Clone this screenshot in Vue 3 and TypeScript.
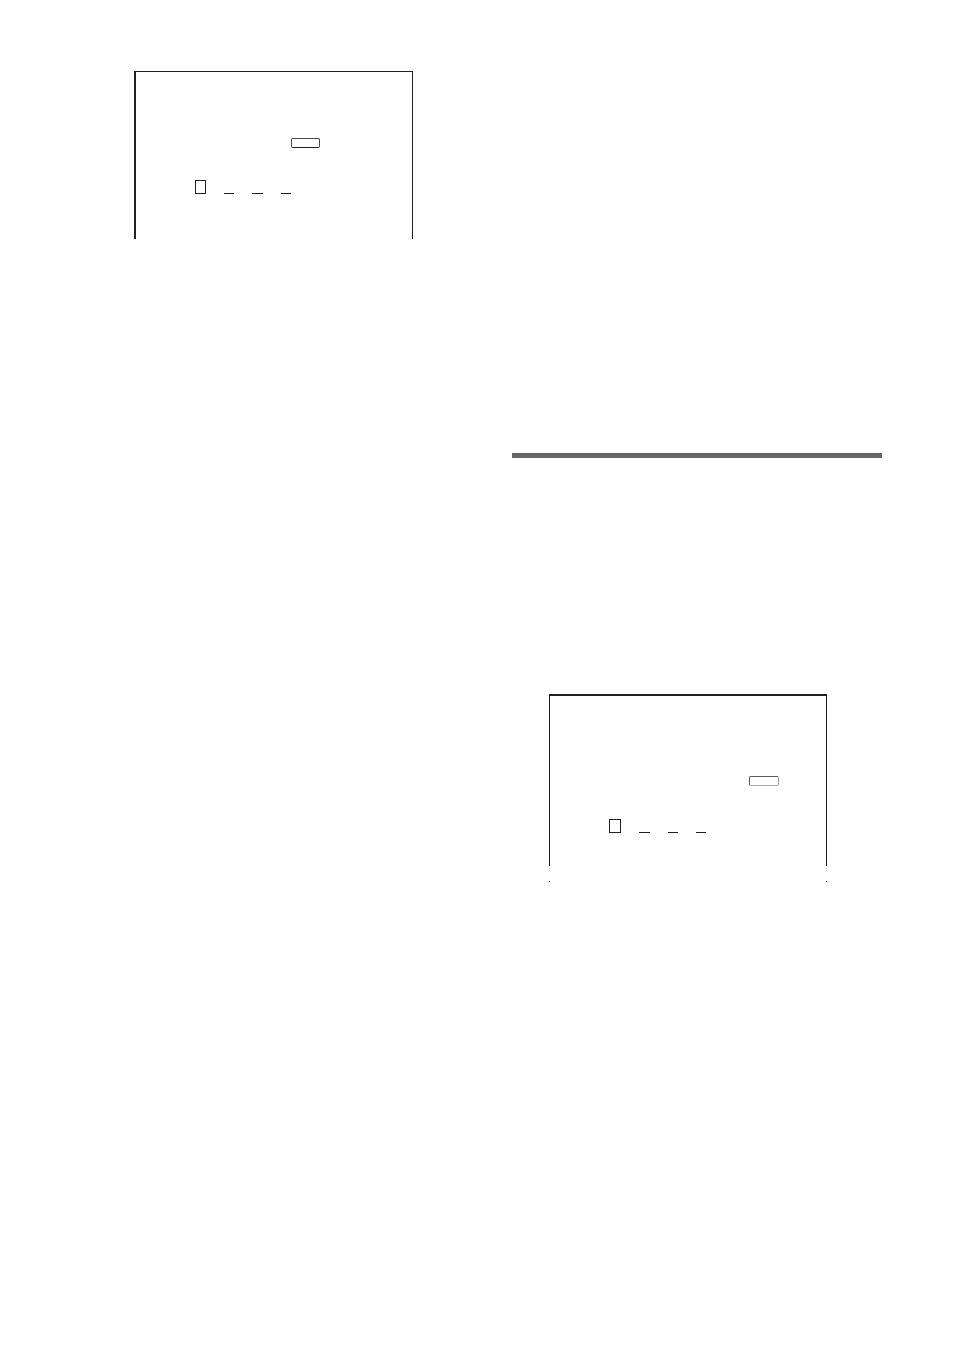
<script setup lang="ts">
interface Slot {
  id: string
  label: string
  boxed: boolean
}

const makeSlots = (prefix: string): Slot[] =>
  [1, 2, 3, 4].map((n) => ({
    id: `${prefix}-${n}`,
    label: `Digit ${n}`,
    boxed: n === 1,
  }))

const firstSlots = makeSlots('first')
const secondSlots = makeSlots('second')
</script>

<template>
  <main class="page">
    <section class="column column-left">
      <form class="panel panel-first" @submit.prevent>
        <button class="key" type="submit" aria-label="Enter"></button>
        <div class="slots">
          <input
            v-for="slot in firstSlots"
            :id="slot.id"
            :key="slot.id"
            class="slot"
            :class="{ boxed: slot.boxed }"
            :aria-label="slot.label"
            type="text"
            maxlength="1"
          />
        </div>
      </form>
    </section>
    <section class="column column-right">
      <hr class="rule" />
      <form class="panel panel-second" @submit.prevent>
        <button class="key key-light" type="submit" aria-label="Enter"></button>
        <div class="slots">
          <input
            v-for="slot in secondSlots"
            :id="slot.id"
            :key="slot.id"
            class="slot"
            :class="{ boxed: slot.boxed }"
            :aria-label="slot.label"
            type="text"
            maxlength="1"
          />
        </div>
      </form>
      <div class="corners"></div>
    </section>
  </main>
</template>

<style>
body {
  margin: 0;
  background: #fff;
}
</style>

<style scoped>
.page {
  box-sizing: border-box;
  display: grid;
  grid-template-columns: 1fr 1fr;
  column-gap: 70px;
  min-height: 100vh;
  padding: 0 72px;
  background: #fff;
  font-family: "Liberation Sans", Arial, sans-serif;
}

.column-left {
  padding-top: 71px;
}

.column-right {
  padding-top: 453px;
}

.panel {
  display: flex;
  flex-direction: column;
  border: 1px solid #231f20;
  border-bottom: 0;
}

.panel-first {
  margin: 0 29px 0 62px;
  padding: 66px 0 45px;
  border-left-width: 2px;
}

.panel-second {
  margin: 236px 55px 0 37px;
  padding: 80px 0 33px;
  border-top-width: 2px;
}

.key {
  box-sizing: border-box;
  align-self: flex-end;
  width: 29px;
  height: 10px;
  margin: 0 92px 32px 0;
  padding: 0;
  border: 1px solid #4a4748;
  border-bottom-color: #231f20;
  border-radius: 2px;
  background: #fff;
}

.key-light {
  width: 30px;
  margin: 0 47px 33px 0;
  border-color: #5c595a #a09e9f #a9a7a8 #5c595a;
}

.slots {
  display: flex;
  gap: 18px;
  margin-left: 59px;
}

.slot {
  box-sizing: border-box;
  width: 10px;
  height: 14px;
  margin: 0;
  padding: 0;
  border: 0;
  border-bottom: 1px solid #231f20;
  border-radius: 0;
  outline: 0;
  background: transparent;
  font: 10px/12px "Liberation Sans", Arial, sans-serif;
  text-align: center;
}

.slot:nth-child(3) {
  width: 11px;
}

.boxed {
  width: 11px;
  border: 1px solid #231f20;
}

.panel-second .boxed {
  width: 12px;
}

.panel-second .slot:nth-child(2) {
  width: 11px;
}

.panel-second .slot:nth-child(3) {
  width: 10px;
}

.rule {
  height: 5px;
  margin: 0;
  border: 0;
  background: #666566;
}

.corners {
  height: 1px;
  margin: 15px 55px 0 37px;
  border: solid #231f20;
  border-width: 0 1px;
}
</style>
